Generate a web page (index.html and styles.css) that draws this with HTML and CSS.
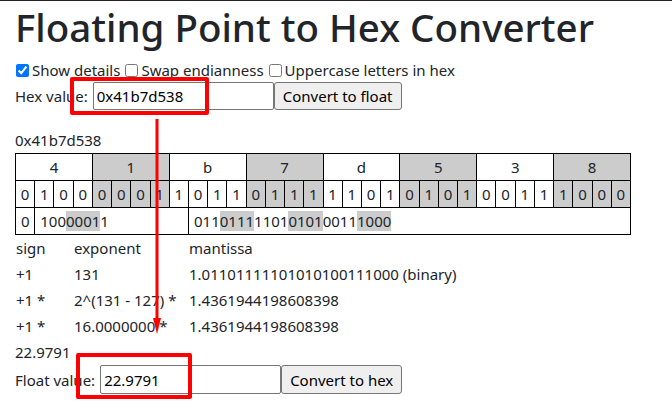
FILE: index.html
```html
<!DOCTYPE html>
<html>
	<head>
		<meta charset="UTF-8">
		<title>Floating Point to Hex Converter</title>
		<meta name="viewport" content="width=device-width, initial-scale=1.0">
		<link rel="stylesheet" href="styles.css">
	</head>
	<body>
		<div class="page">
			<h1 class="title">Floating Point to Hex Converter</h1>
			<div class="options">
				<label class="opt"><input type="checkbox" checked>Show details</label>
				<label class="opt"><input type="checkbox">Swap endianness</label>
				<label class="opt"><input type="checkbox">Uppercase letters in hex</label>
			</div>
			<form class="convert" id="hexForm">
				<label for="hexValue">Hex value:</label>
				<input id="hexValue" class="field" type="text" value="0x41b7d538"><button type="submit" class="btn">Convert to float</button>
			</form>
			<div class="result result-hex">0x41b7d538</div>
			<table class="bits">
				<tbody>
					<tr class="nibbles">
						<td colspan="4">4</td>
						<td colspan="4" class="hi">1</td>
						<td colspan="4">b</td>
						<td colspan="4" class="hi">7</td>
						<td colspan="4">d</td>
						<td colspan="4" class="hi">5</td>
						<td colspan="4">3</td>
						<td colspan="4" class="hi">8</td>
					</tr>
					<tr class="bitrow">
						<td>0</td><td>1</td><td>0</td><td>0</td>
						<td class="hi">0</td><td class="hi">0</td><td class="hi">0</td><td class="hi">1</td>
						<td>1</td><td>0</td><td>1</td><td>1</td>
						<td class="hi">0</td><td class="hi">1</td><td class="hi">1</td><td class="hi">1</td>
						<td>1</td><td>1</td><td>0</td><td>1</td>
						<td class="hi">0</td><td class="hi">1</td><td class="hi">0</td><td class="hi">1</td>
						<td>0</td><td>0</td><td>1</td><td>1</td>
						<td class="hi">1</td><td class="hi">0</td><td class="hi">0</td><td class="hi">0</td>
					</tr>
					<tr class="parts">
						<td>0</td>
						<td colspan="8">100<span class="hi">0001</span>1</td>
						<td colspan="23">011<span class="hi">0111</span>1101<span class="hi">0101</span>0011<span class="hi">1000</span></td>
					</tr>
				</tbody>
			</table>
			<div class="details">
				<div>sign</div><div>exponent</div><div>mantissa</div>
				<div>+1</div><div>131</div><div>1.01101111101010100111000 (binary)</div>
				<div>+1 *</div><div>2^(131 - 127) *</div><div>1.4361944198608398</div>
				<div>+1 *</div><div>16.0000000 *</div><div>1.4361944198608398</div>
			</div>
			<div class="result">22.9791</div>
			<form class="convert convert-float" id="floatForm">
				<label for="floatValue">Float value:</label>
				<input id="floatValue" class="field" type="text" value="22.9791"><button type="submit" class="btn">Convert to hex</button>
			</form>
		</div>

		<div class="mark mark-hex"></div>
		<div class="mark mark-float"></div>
		<svg class="arrow" width="14" height="222" viewBox="0 0 14 222">
			<line x1="7" y1="4" x2="7" y2="206" stroke="#f00" stroke-width="3"/>
			<polygon points="3,203 11,203 7,219" fill="#f00"/>
		</svg>
	</body>
</html>
```

FILE: styles.css
```css
html, body {
	margin: 0;
	padding: 0;
}
body {
	font-family: "Noto Sans", sans-serif;
	font-size: 15px;
	color: #212529;
	background: #fff;
	border-top: 1px solid #222;
}
.page {
	padding: 2px 15px 0;
}
.title {
	margin: 0 0 7px;
	font-size: 38.5px;
	font-weight: 500;
	line-height: 48px;
	white-space: nowrap;
}
.options {
	display: flex;
	align-items: center;
	height: 24px;
}
.opt {
	display: inline-flex;
	align-items: center;
	margin-right: 4px;
}
.opt input {
	width: 13px;
	height: 13px;
	margin: 0 3px 0 1px;
}
.convert {
	display: flex;
	align-items: center;
	height: 28px;
	margin: 0;
}
.convert label {
	margin-right: 5px;
	line-height: 24px;
}
.convert-float {
	height: 29px;
}
.field {
	box-sizing: border-box;
	width: 181px;
	height: 100%;
	padding: 1px 3px;
	border: 1px solid #767676;
	border-radius: 2px;
	font: inherit;
	color: #000;
}
.btn {
	box-sizing: border-box;
	height: 100%;
	padding: 0 8px;
	border: 1px solid #767676;
	border-radius: 3px;
	background: #efefef;
	font: inherit;
	color: #000;
}
.result {
	line-height: 26px;
}
.result-hex {
	margin-top: 17px;
}
.bits {
	width: 616px;
	margin-left: 0;
	border: 1px solid #000;
	border-collapse: collapse;
	table-layout: fixed;
}
.bits td {
	border: 1px solid #000;
	padding: 0;
	line-height: 26px;
	text-align: center;
	white-space: nowrap;
	overflow: hidden;
}
.bits .parts td {
	text-align: left;
	padding-left: 5px;
}
.hi {
	background: #ccc;
}
.details {
	display: grid;
	grid-template-columns: 58px 115px 1fr;
	grid-auto-rows: 26px;
	line-height: 26px;
	padding-left: 1px;
	white-space: nowrap;
}
.mark {
	position: absolute;
	box-sizing: border-box;
	border: 4px solid #f00;
	border-radius: 2px;
}
.mark-hex {
	left: 70px;
	top: 77px;
	width: 139px;
	height: 38px;
}
.mark-float {
	left: 76px;
	top: 353px;
	width: 116px;
	height: 46px;
}
.arrow {
	position: absolute;
	left: 150px;
	top: 115px;
}
```
